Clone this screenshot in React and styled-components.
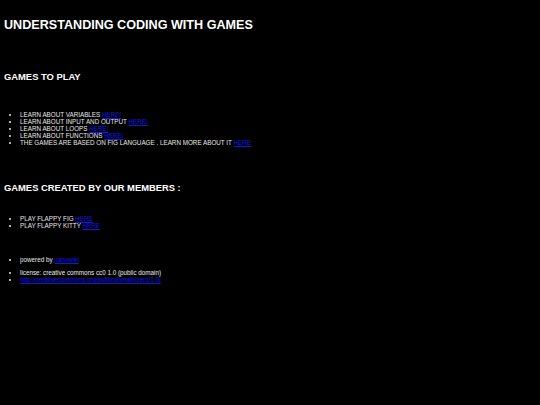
import React from "react";
import styled, { createGlobalStyle } from "styled-components";

const Global = createGlobalStyle`
  html, body { background: #000; }
  body {
    margin: 0;
    padding: 4px;
    color: #e8e8e8;
    font-family: "Liberation Sans", Arial, sans-serif;
  }
`;

const Page = styled.div`
  display: flex;
  flex-direction: column;
`;

const Title = styled.h1`
  margin: 14px 0 0;
  font-size: 12.6px;
  line-height: 15px;
  font-weight: bold;
  color: #fff;
`;

const Heading = styled.h2`
  margin: ${(p) => p.$top}px 0 0;
  font-size: 9.4px;
  line-height: 12px;
  font-weight: bold;
  color: #fff;
`;

const List = styled.ul`
  margin: ${(p) => p.$top}px 0 0;
  padding: 0 0 0 16px;
  list-style: disc;
  font-size: 6.3px;
  line-height: 7px;
`;

const Item = styled.li``;

const Link = styled.a`
  color: #1414e6;
  text-decoration: underline;
`;

export default function App() {
  return (
    <>
      <Global />
      <Page>
        <Title>UNDERSTANDING CODING WITH GAMES</Title>
        <Heading $top={38}>GAMES TO PLAY</Heading>
        <List $top={28}>
          <Item>LEARN ABOUT VARIABLES <Link href="#">HERE!</Link></Item>
          <Item>LEARN ABOUT INPUT AND OUTPUT <Link href="#">HERE!</Link></Item>
          <Item>LEARN ABOUT LOOPS <Link href="#">HERE!</Link></Item>
          <Item>LEARN ABOUT FUNCTIONS <Link href="#">HERE!</Link></Item>
          <Item>THE GAMES ARE BASED ON FIG LANGUAGE . LEARN MORE ABOUT IT <Link href="#">HERE</Link></Item>
        </List>
        <Heading $top={36}>GAMES CREATED BY OUR MEMBERS :</Heading>
        <List $top={21}>
          <Item>PLAY FLAPPY FIG <Link href="#">HERE</Link></Item>
          <Item>PLAY FLAPPY KITTY <Link href="#">HERE</Link></Item>
        </List>
        <List $top={27}>
          <Item>powered by <Link href="#">nanowiki</Link></Item>
        </List>
        <List $top={6}>
          <Item>license: creative commons cc0 1.0 (public domain)</Item>
          <Item><Link href="#">http://creativecommons.org/publicdomain/zero/1.0/</Link></Item>
        </List>
      </Page>
    </>
  );
}
